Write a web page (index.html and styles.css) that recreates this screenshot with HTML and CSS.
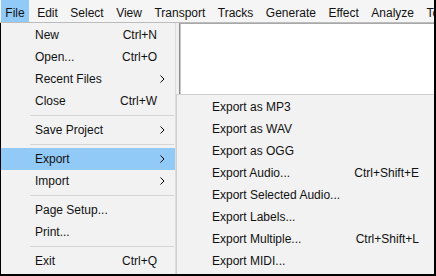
FILE: index.html
```html
<!DOCTYPE html>
<html lang="en">
<head>
  <meta charset="UTF-8">
  <meta name="viewport" content="width=device-width, initial-scale=1.0">
  <title>File menu - Export</title>
  <link rel="stylesheet" href="styles.css">
</head>
<body>
  <div class="window">
    <div class="menubar">
      <span class="menubar-item active">File</span>
      <span class="menubar-item">Edit</span>
      <span class="menubar-item">Select</span>
      <span class="menubar-item">View</span>
      <span class="menubar-item">Transport</span>
      <span class="menubar-item">Tracks</span>
      <span class="menubar-item">Generate</span>
      <span class="menubar-item">Effect</span>
      <span class="menubar-item">Analyze</span>
      <span class="menubar-item">Tools</span>
    </div>

    <div class="workspace">
      <div class="menu file-menu">
        <div class="menu-item"><span class="label">New</span><span class="key">Ctrl+N</span><span class="arrow"></span></div>
        <div class="menu-item"><span class="label">Open...</span><span class="key">Ctrl+O</span><span class="arrow"></span></div>
        <div class="menu-item"><span class="label">Recent Files</span><span class="key"></span><span class="arrow"><svg width="5" height="8" viewBox="0 0 5 8"><polyline points="0.5,0.5 4,4 0.5,7.5" fill="none" stroke="#000" stroke-width="1"/></svg></span></div>
        <div class="menu-item"><span class="label">Close</span><span class="key">Ctrl+W</span><span class="arrow"></span></div>
        <div class="separator"></div>
        <div class="menu-item"><span class="label">Save Project</span><span class="key"></span><span class="arrow"><svg width="5" height="8" viewBox="0 0 5 8"><polyline points="0.5,0.5 4,4 0.5,7.5" fill="none" stroke="#000" stroke-width="1"/></svg></span></div>
        <div class="separator"></div>
        <div class="menu-item selected"><span class="label">Export</span><span class="key"></span><span class="arrow"><svg width="5" height="8" viewBox="0 0 5 8"><polyline points="0.5,0.5 4,4 0.5,7.5" fill="none" stroke="#000" stroke-width="1"/></svg></span></div>
        <div class="menu-item"><span class="label">Import</span><span class="key"></span><span class="arrow"><svg width="5" height="8" viewBox="0 0 5 8"><polyline points="0.5,0.5 4,4 0.5,7.5" fill="none" stroke="#000" stroke-width="1"/></svg></span></div>
        <div class="separator"></div>
        <div class="menu-item"><span class="label">Page Setup...</span><span class="key"></span><span class="arrow"></span></div>
        <div class="menu-item"><span class="label">Print...</span><span class="key"></span><span class="arrow"></span></div>
        <div class="separator"></div>
        <div class="menu-item"><span class="label">Exit</span><span class="key">Ctrl+Q</span><span class="arrow"></span></div>
      </div>

      <div class="side">
        <div class="track-area">
          <div class="track-panel"></div>
        </div>
        <div class="menu submenu">
          <div class="menu-item"><span class="label">Export as MP3</span></div>
          <div class="menu-item"><span class="label">Export as WAV</span></div>
          <div class="menu-item"><span class="label">Export as OGG</span></div>
          <div class="menu-item"><span class="label">Export Audio...</span><span class="key">Ctrl+Shift+E</span></div>
          <div class="menu-item"><span class="label">Export Selected Audio...</span></div>
          <div class="menu-item"><span class="label">Export Labels...</span></div>
          <div class="menu-item"><span class="label">Export Multiple...</span><span class="key">Ctrl+Shift+L</span></div>
          <div class="menu-item"><span class="label">Export MIDI...</span></div>
        </div>
      </div>
    </div>
  </div>
</body>
</html>
```

FILE: styles.css
```css
body { margin: 0; font-family: "Liberation Sans", Arial, sans-serif; font-size: 12px; color: #111; background: #f0f0f0; }
.window { width: 436px; height: 276px; box-sizing: border-box; border-right: 2px solid #000; border-bottom: 2px solid #000; overflow: hidden; display: flex; flex-direction: column; }

/* top menu bar */
.menubar { display: flex; gap: 3.9px; height: 22px; padding-left: 1px; background: #f5f5f5; border-bottom: 1px solid #bcbcbc; white-space: nowrap; flex-shrink: 0; }
.menubar-item { padding: 4px 4.3px 0; line-height: 18px; }
.menubar-item.active { background: #91c9f7; }

.workspace { flex: 1; display: flex; border-left: 1px solid #000; min-height: 0; }

/* dropdown menus */
.menu { background: #f2f2f2; }
.menu-item { display: flex; height: 22px; line-height: 22px; white-space: nowrap; }
.menu-item .label { flex: 1; }
.menu-item.selected { background: #91c9f7; }

.file-menu { width: 175px; box-sizing: border-box; padding-top: 1px; border-right: 1px solid #dcdcdc; flex-shrink: 0; }
.file-menu .menu-item { padding: 0 10px 0 34px; }
.file-menu .key { text-align: right; }
.file-menu .arrow { width: 8px; display: flex; justify-content: flex-end; align-items: center; }
.separator { height: 1px; background: #d5d5d5; margin: 3px 1px 3px 29px; }

.side { flex: 1; display: flex; flex-direction: column; min-width: 0; }
.track-area { height: 71px; padding-left: 3px; display: flex; flex-shrink: 0; }
.track-panel { flex: 1; background: #fff; border-left: 1px solid #8c8c8c; border-top: 1px solid #a8a8a8; box-shadow: inset 1px 0 #c8c8c8; }

.submenu { flex: 1; border-top: 1px solid #cfcfcf; border-left: 1px solid #cfcfcf; padding-top: 1px; }
.submenu .menu-item { padding: 0 15px 0 35px; }
```
